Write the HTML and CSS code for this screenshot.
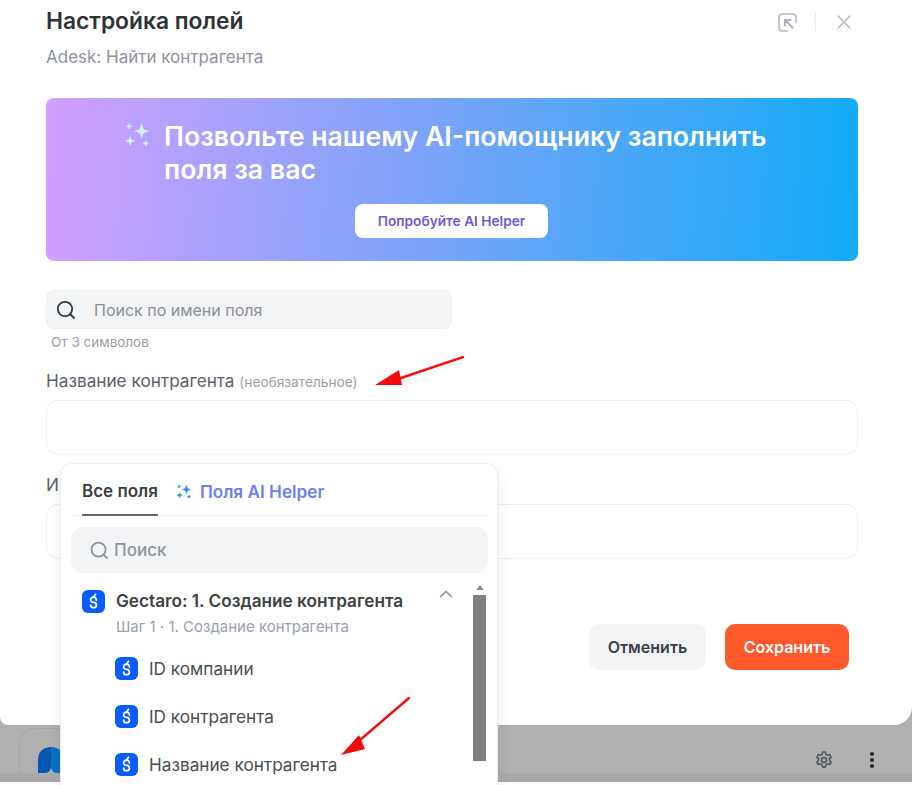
FILE: index.html
```html
<!DOCTYPE html>
<html lang="ru">
<head>
<meta charset="UTF-8">
<meta name="viewport" content="width=device-width, initial-scale=1.0">
<title>Настройка полей</title>
<link rel="stylesheet" href="styles.css">
</head>
<body>
<svg class="defs" width="0" height="0">
  <symbol id="adesk" viewBox="0 0 24 24">
    <rect width="24" height="24" rx="6" fill="#0b5cff"/>
    <path d="M15 10.500a3 2.800 0 1 0-3 2.500c1.700 0 3 1.200 3 2.800s-1.300 2.700-3 2.700-3-1.100-3-2.700" fill="none" stroke="#fff" stroke-width="1.800" stroke-linecap="round"/>
    <path d="M14 4.500 12 7.700" fill="none" stroke="#fff" stroke-width="1.800" stroke-linecap="round"/>
  </symbol>
  <symbol id="spark" viewBox="0 0 26 26">
    <path d="M17 2c.6 4.300 2.200 6 6.500 6.800-4.300.7-5.900 2.400-6.500 6.700-.6-4.300-2.200-6-6.500-6.700C14.800 8 16.400 6.300 17 2Z"/>
    <path d="M6 14c.4 2.800 1.400 3.800 4 4.300-2.600.5-3.600 1.500-4 4.200-.4-2.700-1.400-3.700-4-4.200 2.600-.5 3.600-1.500 4-4.300Z"/>
    <path d="M5 1.500c.3 1.700.9 2.300 2.600 2.700C5.900 4.500 5.300 5.100 5 6.800c-.3-1.700-.9-2.300-2.600-2.600C4.100 3.800 4.700 3.200 5 1.500Z"/>
    <path d="M21 18c.3 1.700.9 2.300 2.600 2.600-1.700.3-2.300.9-2.600 2.600-.3-1.700-.9-2.300-2.600-2.600 1.700-.3 2.300-.9 2.600-2.600Z"/>
  </symbol>
</svg>

<div class="screen">
  <div class="modal">
    <div class="modal-head">
      <div>
        <h1 class="title">Настройка полей</h1>
        <p class="subtitle">Adesk: Найти контрагента</p>
      </div>
      <div class="head-tools">
        <svg width="21" height="21" viewBox="0 0 21 21" fill="none" stroke="#c3c6d0" stroke-width="2.200" stroke-linecap="round">
          <path d="M19 10V5.500A3.500 3.500 0 0 0 15.500 2h-10A3.500 3.500 0 0 0 2 5.500v10A3.500 3.500 0 0 0 5.500 19H10"/>
          <path d="M15.500 15.500 8 8M8 13.500V8h5.500" stroke="#aeb2be"/>
        </svg>
        <span class="tool-sep"></span>
        <svg width="14" height="14" viewBox="0 0 14 14" fill="none" stroke="#b3b8c4" stroke-width="1.500" stroke-linecap="round">
          <path d="M1 1l12 12M13 1 1 13"/>
        </svg>
      </div>
    </div>

    <div class="banner">
      <div class="banner-text">
        <svg class="banner-spark" width="27" height="27"><use href="#spark"/></svg>
        <h2>Позвольте нашему AI-помощнику заполнить поля за вас</h2>
      </div>
      <button class="banner-btn">Попробуйте AI Helper</button>
    </div>

    <div class="field-search">
      <svg width="20" height="20" viewBox="0 0 20 20" fill="none" stroke="#2f3a3f" stroke-width="1.800" stroke-linecap="round">
        <circle cx="9" cy="9" r="7.200"/><path d="M14.500 14.500 18 18"/>
      </svg>
      <span>Поиск по имени поля</span>
    </div>
    <p class="hint">От 3 символов</p>

    <label class="label first">Название контрагента <small>(необязательное)</small></label>
    <div class="input"></div>
    <label class="label second">И</label>
    <div class="input"></div>

    <div class="actions">
      <button class="btn btn-cancel">Отменить</button>
      <button class="btn btn-save">Сохранить</button>
    </div>
  </div>

  <div class="bottom-bar">
    <div class="app-card">
      <svg width="26" height="27" viewBox="0 0 26 27">
        <path d="M13 0C5 0 0 5 0 13v13h7c4 0 6-3 6-7Z" fill="#0458b0"/>
        <path d="M13 0c8 0 13 5 13 13v13h-7c-4 0-6-3-6-7Z" fill="#0a70c4"/>
      </svg>
    </div>
    <div class="bar-tools">
      <svg width="20" height="20" viewBox="0 0 24 24" fill="none" stroke="#4d5360" stroke-width="1.800" stroke-linejoin="round">
        <path d="M10.300 2.500h3.400l.6 2.800 1.900 1.100 2.700-.9 1.700 3-2.100 1.900v2.200l2.100 1.900-1.700 3-2.700-.9-1.900 1.100-.6 2.800h-3.400l-.6-2.800-1.900-1.100-2.700.9-1.700-3 2.100-1.900v-2.200L3.400 8.500l1.700-3 2.700.9 1.900-1.100Z"/>
        <circle cx="12" cy="12" r="3"/>
      </svg>
      <span class="dots"><i></i><i></i><i></i></span>
    </div>
  </div>
  <div class="bar-strip"></div>
</div>

<div class="popup">
  <div class="tabs">
    <span class="tab active">Все поля</span>
    <span class="tab tab-ai">
      <svg width="16" height="16"><use href="#spark"/></svg>
      Поля AI Helper
    </span>
  </div>
  <div class="popup-search">
    <svg width="19" height="19" viewBox="0 0 20 20" fill="none" stroke="#8d929d" stroke-width="1.800" stroke-linecap="round">
      <circle cx="9" cy="9" r="7.400"/><path d="M14.500 14.500 18 18"/>
    </svg>
    <span>Поиск</span>
  </div>
  <div class="popup-list">
    <div class="list-body">
      <div class="group">
        <svg class="group-icon" width="23" height="23"><use href="#adesk"/></svg>
        <div>
          <div class="group-title">Gectaro: 1. Создание контрагента</div>
          <div class="group-sub">Шаг 1 · 1. Создание контрагента</div>
        </div>
        <svg class="chevron" width="14" height="8" viewBox="0 0 14 8" fill="none" stroke="#9aa0ad" stroke-width="1.700" stroke-linecap="round" stroke-linejoin="round">
          <path d="M1.500 6.500 7 1.500l5.500 5"/>
        </svg>
      </div>
      <div class="item"><svg width="23" height="23"><use href="#adesk"/></svg>ID компании</div>
      <div class="item"><svg width="23" height="23"><use href="#adesk"/></svg>ID контрагента</div>
      <div class="item"><svg width="23" height="23"><use href="#adesk"/></svg>Название контрагента</div>
    </div>
    <div class="scrollbar">
      <span class="scroll-up"></span>
      <span class="scroll-thumb"></span>
    </div>
  </div>
</div>

<svg class="arrow arrow-one" width="92" height="32" viewBox="0 0 92 32">
  <path d="M88 1 20 24" stroke="#f01010" stroke-width="2.400" stroke-linecap="round"/>
  <path d="M0 29 24 14l3 15Z" fill="#f40a0a"/>
</svg>
<svg class="arrow arrow-two" width="72" height="60" viewBox="0 0 72 60">
  <path d="M69 1 20 43" stroke="#f01010" stroke-width="2.400" stroke-linecap="round"/>
  <path d="M1 58 19 38l6 14Z" fill="#f40a0a"/>
</svg>
</body>
</html>
```

FILE: styles.css
```css
* {
  box-sizing: border-box;
}

html, body {
  height: 100%;
}

body {
  margin: 0;
  font-family: Inter, "Noto Sans", sans-serif;
  background-color: #fff;
  color: #3a3f47;
  overflow: hidden;
}

p, h1, h2 {
  margin: 0;
}

.defs {
  position: absolute;
}

.screen {
  height: 782px;
  background-color: #b0b0b0;
  display: flex;
  flex-direction: column;
}

.modal {
  height: 725px;
  flex-shrink: 0;
  padding: 7px 54px 0 46px;
  background-color: #fff;
  border-radius: 0 0 18px 8px;
}

.modal-head {
  display: flex;
  justify-content: space-between;
  height: 91px;
}

.title {
  font-size: 22.800px;
  line-height: 28px;
  font-weight: 600;
  color: #2f3336;
}

.subtitle {
  margin-top: 12px;
  font-size: 17px;
  line-height: 20px;
  color: #8d929c;
}

.head-tools {
  display: flex;
  align-items: center;
  align-self: flex-start;
  margin: 5px 7px 0 0;
  height: 20px;
}

.tool-sep {
  width: 1px;
  height: 18px;
  margin: 0 21px 0 17px;
  background-color: #e9eaec;
}

.banner {
  height: 163px;
  padding-top: 22px;
  border-radius: 8px;
  background: linear-gradient(95deg, #d29fff 0%, #74a4f8 50%, #10abf6 100%);
  text-align: center;
}

.banner-text {
  display: flex;
  align-items: flex-start;
  gap: 13px;
  padding-left: 78px;
  text-align: left;
}

.banner-spark {
  flex-shrink: 0;
  margin-top: 2px;
  fill: #d5f0ff;
  stroke: #d5f0ff;
  stroke-width: 0.700px;
}

.banner-text h2 {
  width: 640px;
  font-size: 26.700px;
  line-height: 33px;
  font-weight: 600;
  color: #fff;
}

.banner-btn {
  width: 193px;
  height: 34px;
  margin: 18px 1px 0 0;
  border: none;
  border-radius: 8px;
  background-color: #fff;
  font-family: inherit;
  font-size: 13.700px;
  font-weight: 600;
  color: #6a5bd6;
}

.field-search {
  display: flex;
  align-items: center;
  gap: 18px;
  width: 406px;
  height: 39px;
  margin-top: 29px;
  padding-left: 9px;
  background-color: #f3f4f6;
  border: 1px solid #eceef0;
  border-radius: 8px;
  font-size: 16px;
  color: #8b8f97;
}

.hint {
  margin: 5px 0 0 5px;
  font-size: 13.500px;
  line-height: 17px;
  color: #9a9ea6;
}

.label {
  display: block;
  height: 20px;
  font-size: 17.200px;
  line-height: 20px;
  color: #5b606b;
}

.label small {
  font-size: 13.700px;
  color: #9a9ea6;
}

.label.first {
  margin-top: 20px;
}

.label.second {
  margin-top: 20px;
}

.input {
  height: 55px;
  margin-top: 9px;
  border: 1px solid #ebecef;
  border-radius: 12px;
}

.actions {
  display: flex;
  justify-content: flex-end;
  gap: 19px;
  margin: 65px 9px 0 0;
}

.btn {
  height: 46px;
  border: none;
  border-radius: 10px;
  font-family: inherit;
  font-size: 16px;
  font-weight: 600;
}

.btn-cancel {
  width: 117px;
  background-color: #f3f4f6;
  color: #3a3f47;
}

.btn-save {
  width: 124px;
  background-color: #ff5a2c;
  color: #fff;
}

.bottom-bar {
  flex: 1;
  display: flex;
  justify-content: space-between;
  padding: 3px 0 0 19px;
  overflow: hidden;
}

.app-card {
  width: 300px;
  height: 60px;
  padding: 18px 0 0 18px;
  border: 1px solid #a4a4a4;
  border-radius: 16px 0 0 0;
}

.bar-tools {
  display: flex;
  align-items: center;
  gap: 36px;
  height: 64px;
  padding: 0 38px 0 0;
}

.dots {
  display: flex;
  flex-direction: column;
  gap: 2px;
}

.dots i {
  width: 4px;
  height: 4px;
  border-radius: 50%;
  background-color: #2c2f36;
}

.bar-strip {
  height: 9px;
  flex-shrink: 0;
  background-color: #a9a9a9;
}

/* выпадающий список поверх формы */
.popup {
  position: absolute;
  left: 60px;
  top: 463px;
  width: 438px;
  height: 340px;
  padding: 0 9px 0 10px;
  background-color: #fff;
  border: 1px solid #ebecef;
  border-radius: 12px;
  box-shadow: 0 4px 14px rgba(0, 0, 0, 0.08);
}

.tabs {
  display: flex;
  align-items: flex-start;
  gap: 18px;
  height: 52px;
  padding: 16px 0 0 11px;
  border-bottom: 1px solid #ebecef;
}

.tab {
  display: flex;
  align-items: center;
  height: 36px;
  padding-bottom: 12px;
  font-size: 17px;
  line-height: 24px;
  font-weight: 600;
}

.tab.active {
  color: #3a3f3f;
  border-bottom: 2px solid #666b6b;
}

.tab-ai {
  gap: 8px;
  font-size: 17.200px;
  color: #6b80f5;
  fill: #1f90f5;
  stroke: #1f90f5;
  stroke-width: 1px;
}

.popup-search {
  display: flex;
  align-items: center;
  gap: 5px;
  height: 46px;
  margin-top: 11px;
  padding-left: 19px;
  background-color: #f3f4f6;
  border-radius: 12px;
  font-size: 17px;
  font-weight: 500;
  color: #8f95a0;
}

.popup-list {
  display: flex;
  justify-content: space-between;
  margin: 12px 1px 0 0;
}

.list-body {
  width: 382px;
  padding: 5px 0 0 11px;
}

.group {
  display: flex;
  align-items: flex-start;
  gap: 11px;
  height: 54px;
}

.group-icon {
  flex-shrink: 0;
}

.group-title {
  font-size: 17.200px;
  line-height: 22px;
  font-weight: 600;
  color: #3d4242;
}

.group-sub {
  margin-top: 5px;
  font-size: 15px;
  line-height: 20px;
  color: #9aa0b0;
}

.chevron {
  margin: 0 0 0 auto;
}

.item {
  display: flex;
  align-items: center;
  gap: 11px;
  height: 48px;
  padding-left: 33px;
  font-size: 17.200px;
  color: #4a4f4f;
}

.scrollbar {
  display: flex;
  flex-direction: column;
  align-items: center;
  width: 13px;
  margin-right: 1px;
}

.scroll-up {
  width: 0;
  height: 0;
  border: 4px solid transparent;
  border-top: 0;
  border-bottom: 5px solid #8a8a8a;
  margin-bottom: 5px;
}

.scroll-thumb {
  width: 13px;
  height: 166px;
  background-color: #808080;
}

.arrow {
  position: absolute;
}

.arrow-one {
  left: 375px;
  top: 356px;
}

.arrow-two {
  left: 340px;
  top: 697px;
}
```
